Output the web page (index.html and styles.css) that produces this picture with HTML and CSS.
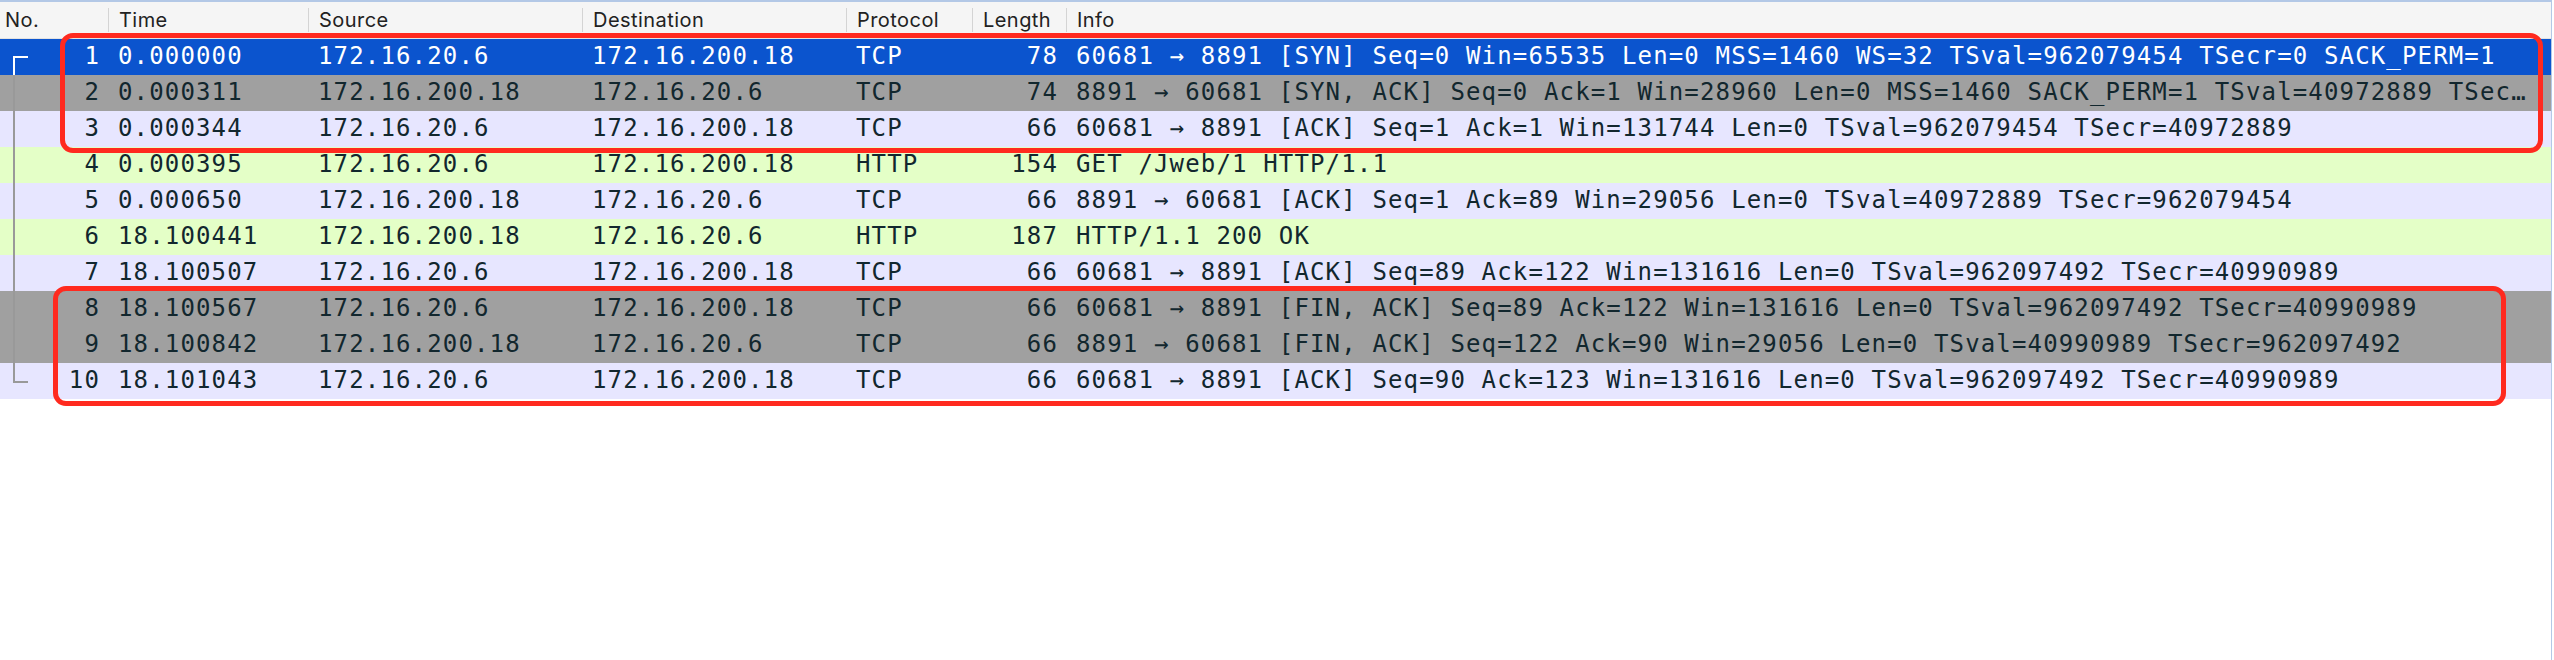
FILE: index.html
```html
<!DOCTYPE html>
<html lang="en">
<head>
<meta charset="utf-8">
<title>Packet list</title>
<link rel="stylesheet" href="styles.css">
</head>
<body>
<div class="packet-list">
  <div class="header">
    <div class="hcell hno">No.</div>
    <div class="hcell">Time</div>
    <div class="hcell">Source</div>
    <div class="hcell">Destination</div>
    <div class="hcell">Protocol</div>
    <div class="hcell">Length</div>
    <div class="hcell hlast">Info</div>
  </div>
  <div class="rows">
    <div class="row sel"><span class="c no">1</span><span class="c">0.000000</span><span class="c">172.16.20.6</span><span class="c">172.16.200.18</span><span class="c">TCP</span><span class="c len">78</span><span class="c info">60681 → 8891 [SYN] Seq=0 Win=65535 Len=0 MSS=1460 WS=32 TSval=962079454 TSecr=0 SACK_PERM=1</span></div>
    <div class="row gry"><span class="c no">2</span><span class="c">0.000311</span><span class="c">172.16.200.18</span><span class="c">172.16.20.6</span><span class="c">TCP</span><span class="c len">74</span><span class="c info">8891 → 60681 [SYN, ACK] Seq=0 Ack=1 Win=28960 Len=0 MSS=1460 SACK_PERM=1 TSval=40972889 TSecr=962079454</span></div>
    <div class="row lav"><span class="c no">3</span><span class="c">0.000344</span><span class="c">172.16.20.6</span><span class="c">172.16.200.18</span><span class="c">TCP</span><span class="c len">66</span><span class="c info">60681 → 8891 [ACK] Seq=1 Ack=1 Win=131744 Len=0 TSval=962079454 TSecr=40972889</span></div>
    <div class="row grn"><span class="c no">4</span><span class="c">0.000395</span><span class="c">172.16.20.6</span><span class="c">172.16.200.18</span><span class="c">HTTP</span><span class="c len">154</span><span class="c info">GET /Jweb/1 HTTP/1.1</span></div>
    <div class="row lav"><span class="c no">5</span><span class="c">0.000650</span><span class="c">172.16.200.18</span><span class="c">172.16.20.6</span><span class="c">TCP</span><span class="c len">66</span><span class="c info">8891 → 60681 [ACK] Seq=1 Ack=89 Win=29056 Len=0 TSval=40972889 TSecr=962079454</span></div>
    <div class="row grn"><span class="c no">6</span><span class="c">18.100441</span><span class="c">172.16.200.18</span><span class="c">172.16.20.6</span><span class="c">HTTP</span><span class="c len">187</span><span class="c info">HTTP/1.1 200 OK</span></div>
    <div class="row lav"><span class="c no">7</span><span class="c">18.100507</span><span class="c">172.16.20.6</span><span class="c">172.16.200.18</span><span class="c">TCP</span><span class="c len">66</span><span class="c info">60681 → 8891 [ACK] Seq=89 Ack=122 Win=131616 Len=0 TSval=962097492 TSecr=40990989</span></div>
    <div class="row gry"><span class="c no">8</span><span class="c">18.100567</span><span class="c">172.16.20.6</span><span class="c">172.16.200.18</span><span class="c">TCP</span><span class="c len">66</span><span class="c info">60681 → 8891 [FIN, ACK] Seq=89 Ack=122 Win=131616 Len=0 TSval=962097492 TSecr=40990989</span></div>
    <div class="row gry"><span class="c no">9</span><span class="c">18.100842</span><span class="c">172.16.200.18</span><span class="c">172.16.20.6</span><span class="c">TCP</span><span class="c len">66</span><span class="c info">8891 → 60681 [FIN, ACK] Seq=122 Ack=90 Win=29056 Len=0 TSval=40990989 TSecr=962097492</span></div>
    <div class="row lav"><span class="c no">10</span><span class="c">18.101043</span><span class="c">172.16.20.6</span><span class="c">172.16.200.18</span><span class="c">TCP</span><span class="c len">66</span><span class="c info">60681 → 8891 [ACK] Seq=90 Ack=123 Win=131616 Len=0 TSval=962097492 TSecr=40990989</span></div>
  </div>

  <svg class="tree" width="40" height="400" viewBox="0 0 40 400" aria-hidden="true">
    <rect x="13" y="56" width="15" height="2" fill="#ffffff"/>
    <rect x="13" y="56" width="2" height="19" fill="#ffffff"/>
    <rect x="13" y="75" width="2" height="308" fill="#999999"/>
    <rect x="13" y="381" width="15" height="2" fill="#999999"/>
  </svg>

  <div class="mark mark-handshake"></div>
  <div class="mark mark-teardown"></div>
</div>
</body>
</html>
```

FILE: styles.css
```css
html, body {
  margin: 0;
  padding: 0;
  background: #ffffff;
}

.packet-list {
  position: relative;
  width: 2551px;
  border-top: 2px solid #b3c8e6;
  border-right: 1px solid #b3c8e6;
  min-height: 658px;
}

.header {
  display: grid;
  grid-template-columns: 109px 200px 274px 264px 126px 94px 1fr;
  height: 36px;
  background: #f5f5f5;
  border-bottom: 1px solid #e2e2e2;
  font-family: "Inter", "Liberation Sans", sans-serif;
  font-size: 20px;
  letter-spacing: 0.45px;
  color: #222222;
}

.hcell {
  margin: 6px 0;
  height: 24px;
  line-height: 24px;
  padding-left: 10px;
  border-right: 1px solid #d4d4d4;
  white-space: nowrap;
}

.hno {
  padding-left: 5px;
}

.hlast {
  border-right: none;
}

.rows {
  display: flex;
  flex-direction: column;
}

.row {
  display: grid;
  grid-template-columns: 109px 200px 274px 264px 126px 94px 1fr;
  height: 36px;
  line-height: 34px;
  font-family: "DejaVu Sans Mono", "Liberation Mono", monospace;
  font-size: 24px;
  letter-spacing: 1.15px;
  color: #12272e;
}

.c {
  display: block;
  padding: 0 8px 0 9px;
  white-space: nowrap;
  overflow: hidden;
}

.c.no,
.c.len {
  text-align: right;
  padding-right: 9px;
}

.c.info {
  text-overflow: ellipsis;
  padding-right: 10px;
}

.sel {
  background: #0b54ce;
  color: #ffffff;
}

.gry {
  background: #a0a0a0;
}

.lav {
  background: #e7e6ff;
}

.grn {
  background: #e4ffc7;
}

.tree {
  position: absolute;
  left: 0;
  top: -2px;
  pointer-events: none;
}

.mark {
  position: absolute;
  box-sizing: border-box;
  border: 5px solid #ff2a1f;
  border-radius: 13px;
  pointer-events: none;
}

.mark-handshake {
  left: 60px;
  top: 31px;
  width: 2483px;
  height: 120px;
}

.mark-teardown {
  left: 53px;
  top: 284px;
  width: 2453px;
  height: 120px;
}
```
